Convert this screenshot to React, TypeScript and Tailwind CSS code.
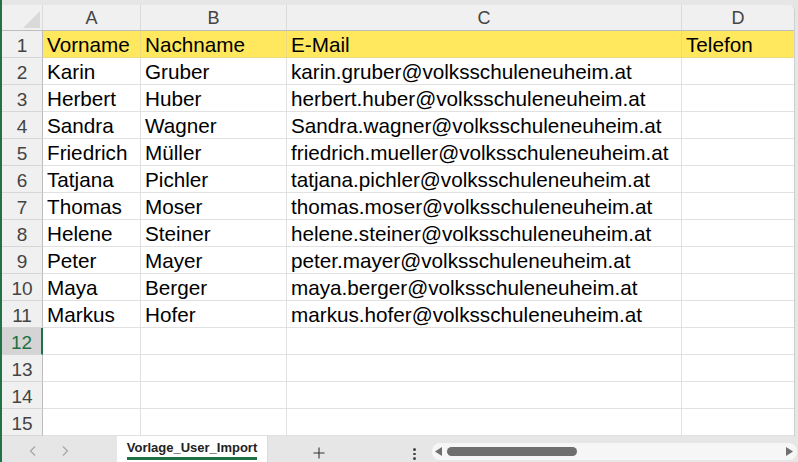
import React from "react";

const rows: string[][] = [
  ["Vorname", "Nachname", "E-Mail", "Telefon"],
  ["Karin", "Gruber", "karin.gruber@volksschuleneuheim.at", ""],
  ["Herbert", "Huber", "herbert.huber@volksschuleneuheim.at", ""],
  ["Sandra", "Wagner", "Sandra.wagner@volksschuleneuheim.at", ""],
  ["Friedrich", "Müller", "friedrich.mueller@volksschuleneuheim.at", ""],
  ["Tatjana", "Pichler", "tatjana.pichler@volksschuleneuheim.at", ""],
  ["Thomas", "Moser", "thomas.moser@volksschuleneuheim.at", ""],
  ["Helene", "Steiner", "helene.steiner@volksschuleneuheim.at", ""],
  ["Peter", "Mayer", "peter.mayer@volksschuleneuheim.at", ""],
  ["Maya", "Berger", "maya.berger@volksschuleneuheim.at", ""],
  ["Markus", "Hofer", "markus.hofer@volksschuleneuheim.at", ""],
  ["", "", "", ""],
  ["", "", "", ""],
  ["", "", "", ""],
  ["", "", "", ""],
];

const colWidths = ["w-[98px]", "w-[146px]", "w-[395px]", "flex-1"];
const letters = ["A", "B", "C", "D"];

function HeaderRow() {
  return (
    <div className="flex h-[26px] bg-[#f0f0f0] border-b border-[#bdbdbd]">
      <div className="w-[41px] relative border-r border-[#dadada]">
        <svg className="absolute left-0 top-0" width="41" height="25">
          <polygon points="21,23 38,23 38,6" fill="#d9d9d9" />
        </svg>
      </div>
      {letters.map((l, i) => (
        <div
          key={l}
          className={`${colWidths[i]} ${i < 3 ? "border-r border-[#dadada]" : ""} text-center text-[18px] leading-[22px] pt-[2px] text-[#444]`}
        >
          {l}
        </div>
      ))}
    </div>
  );
}

function Row({ n, cells }: { n: number; cells: string[] }) {
  const active = n === 12;
  const yellow = n === 1;
  return (
    <div className="flex h-[27px]">
      <div
        className={`w-[41px] text-center text-[19px] leading-[23px] pt-[3px] border-b border-[#d6d6d6] ${
          active
            ? "bg-[#d4d4d4] text-[#1e7145] border-r-2 border-r-[#1e7145]"
            : "bg-[#f0f0f0] text-[#444] border-r border-r-[#bdbdbd]"
        }`}
      >
        {n}
      </div>
      {cells.map((c, i) => (
        <div
          key={i}
          className={`${colWidths[i]} ${
            yellow ? "bg-[#ffe75e] border-[#eedc7a]" : "bg-white border-[#e1e1e1]"
          } ${i < 3 ? "border-r" : ""} border-b pl-[4px] pt-[2px] text-[20.7px] leading-[24px] text-black whitespace-nowrap overflow-hidden`}
        >
          {c}
        </div>
      ))}
    </div>
  );
}

function TabBar() {
  return (
    <div className="h-[26px] flex text-[#444]">
      <div className="w-[115px] flex items-center pl-[27px] gap-[26px] pt-[4px]">
        <svg width="7" height="10" viewBox="0 0 7 10">
          <path d="M6 0.5 L1.5 5 L6 9.5" fill="none" stroke="#a6a6a6" strokeWidth="1.2" />
        </svg>
        <svg width="7" height="10" viewBox="0 0 7 10">
          <path d="M1 0.5 L5.5 5 L1 9.5" fill="none" stroke="#a6a6a6" strokeWidth="1.2" />
        </svg>
      </div>
      <div className="w-[150px] bg-white flex justify-center pt-[4px]">
        <span className="font-bold text-[13px] leading-[16px] pb-[1px] h-[20px] border-b-[3px] border-[#1e7145] text-[#222]">
          Vorlage_User_Import
        </span>
      </div>
      <div className="w-[165px] relative border-l border-[#dcdcdc]">
        <svg className="absolute left-[45px] top-[11px]" width="12" height="12" viewBox="0 0 12 12">
          <path d="M6 0.5 V11.5 M0.5 6 H11.5" stroke="#333" strokeWidth="1.1" />
        </svg>
        <div className="absolute left-[145px] top-[12px] flex flex-col gap-[2px]">
          <div className="w-[2.5px] h-[2.5px] rounded-full bg-[#444]" />
          <div className="w-[2.5px] h-[2.5px] rounded-full bg-[#444]" />
          <div className="w-[2.5px] h-[2.5px] rounded-full bg-[#444]" />
        </div>
      </div>
      <div className="flex-1 mr-[1px] mt-[7px] h-[17px] rounded-[8px] bg-[#f6f6f6] flex items-center pl-[3px] pr-[4px]">
        <svg width="7" height="9" viewBox="0 0 7 9">
          <polygon points="7,0 7,9 0,4.5" fill="#6f6f6f" />
        </svg>
        <div className="ml-[5px] w-[130px] h-[9px] rounded-full bg-[#6f6f6f]" />
        <div className="flex-1" />
        <svg width="7" height="9" viewBox="0 0 7 9">
          <polygon points="0,0 0,9 7,4.5" fill="#6f6f6f" />
        </svg>
      </div>
    </div>
  );
}

export default function App() {
  return (
    <div className="w-[798px] h-[462px] bg-[#e6e6e6] flex overflow-hidden font-['Liberation_Sans',Arial,sans-serif]">
      <div className="w-[2px] bg-[#217346]" />
      <div className="flex-1 flex flex-col">
        <div className="h-[5px]" />
        <div className="w-[793px] rounded-tr-[6px] overflow-hidden border-r border-[#cfcfcf] bg-white">
          <HeaderRow />
          {rows.map((r, i) => (
            <Row key={i} n={i + 1} cells={r} />
          ))}
        </div>
        <TabBar />
      </div>
    </div>
  );
}
